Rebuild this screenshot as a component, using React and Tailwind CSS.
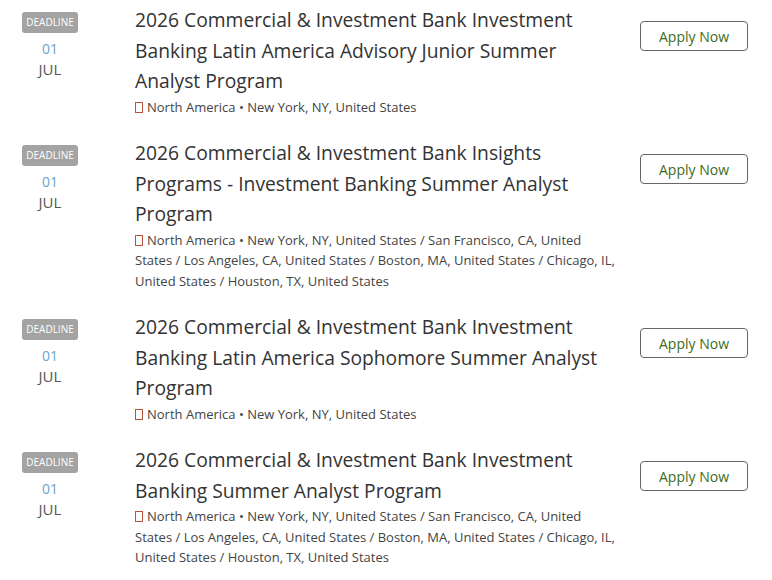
import React from 'react';

const jobs = [
  {
    title: '2026 Commercial & Investment Bank Investment Banking Latin America Advisory Junior Summer Analyst Program',
    location: 'North America • New York, NY, United States',
  },
  {
    title: '2026 Commercial & Investment Bank Insights Programs - Investment Banking Summer Analyst Program',
    location:
      'North America • New York, NY, United States / San Francisco, CA, United States / Los Angeles, CA, United States / Boston, MA, United States / Chicago, IL, United States / Houston, TX, United States',
  },
  {
    title: '2026 Commercial & Investment Bank Investment Banking Latin America Sophomore Summer Analyst Program',
    location: 'North America • New York, NY, United States',
  },
  {
    title: '2026 Commercial & Investment Bank Investment Banking Summer Analyst Program',
    location:
      'North America • New York, NY, United States / San Francisco, CA, United States / Los Angeles, CA, United States / Boston, MA, United States / Chicago, IL, United States / Houston, TX, United States',
  },
];

const JobRow = ({ job }) => (
  <div className="flex items-start">
    {/* Deadline column */}
    <div className="w-[100px] shrink-0 flex flex-col items-center pt-[7px]">
      <span className="rounded-[3px] bg-[#a3a3a3] px-[4px] py-[4px] text-[10px] leading-[13px] font-medium text-white">
        DEADLINE
      </span>
      <span className="mt-[6px] text-[14px] leading-[20px] text-[#6ba3c9]">01</span>
      <span className="text-[15px] leading-[21px] text-[#555555]">JUL</span>
    </div>

    {/* Title + location */}
    <div className="ml-[35px] w-[485px] shrink-0">
      <div className="text-[19.25px] leading-[30.5px] text-[#333333]">{job.title}</div>
      <div className="text-[13px] leading-[20.5px] text-[#444444]">
        <span className="mr-[4px] inline-block h-[11px] w-[8px] border border-[#b5533c] align-[-1px]" />
        {job.location}
      </div>
    </div>

    {/* Apply button */}
    <div className="ml-[20px] pt-[16px]">
      <button className="h-[30px] w-[108px] rounded-[4px] border border-[#666666] bg-white text-[14px] font-medium text-[#3d6b22]">
        Apply Now
      </button>
    </div>
  </div>
);

export default function App() {
  return (
    <div
      className="w-[772px] h-[580px] overflow-hidden bg-white pt-[5px] flex flex-col gap-[21px]"
      style={{ fontFamily: '"Open Sans", "Noto Sans", sans-serif' }}
    >
      {jobs.map((job, i) => (
        <JobRow key={i} job={job} />
      ))}
    </div>
  );
}
